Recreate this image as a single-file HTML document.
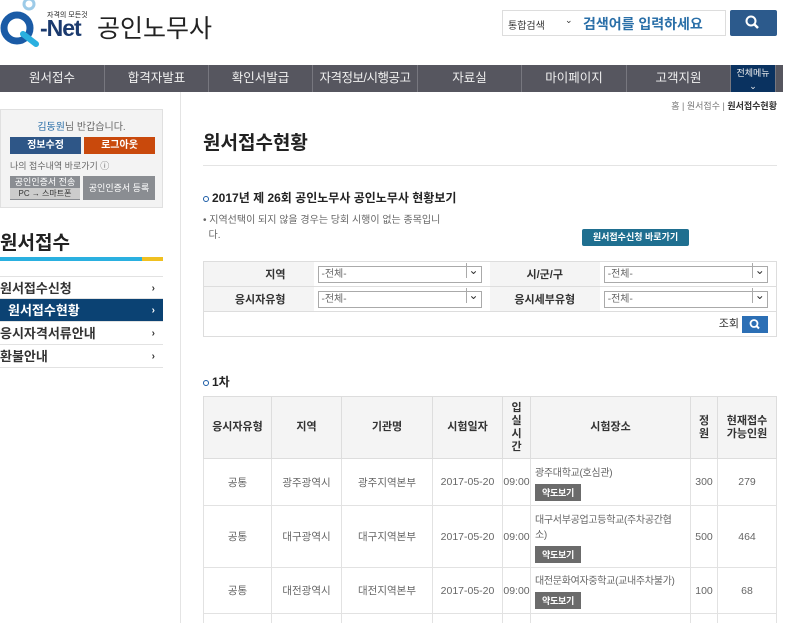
<!DOCTYPE html>
<html><head><meta charset="utf-8"><style>
*{margin:0;padding:0;box-sizing:border-box}
html,body{width:800px;height:623px;overflow:hidden}
body{background:#fff;font-family:"Liberation Sans","Noto Sans CJK KR",sans-serif;color:#333;position:relative}
.a{position:absolute}
.nav{top:65px;left:0;width:783px;height:27px;background:#56565f;display:flex}
.nav div{height:27px;line-height:27px;text-align:center;color:#f0f0f0;font-size:12.5px;border-right:1px solid #77777f;white-space:nowrap;overflow:hidden}
.menu div{position:absolute;left:0;width:163px;height:23px;line-height:23px;font-size:13px;font-weight:bold;color:#333;border-bottom:1px solid #e2e2e2}
.menu span{position:absolute;right:8px;font-size:10px}
table{border-collapse:collapse}
.ft{position:absolute;left:203px;top:261px;width:574px;border:1px solid #ddd}
.ft td{height:25px;font-size:11px;border-bottom:1px solid #ddd}
.ft .l{background:#f4f4f4;text-align:right;padding-right:28px;font-weight:bold;width:110px}
.sel{width:164px;height:17px;border:1px solid #aaa;font-size:10px;color:#666;line-height:15px;padding-left:3px;position:relative;margin-left:4px}
.sel:after{content:"⌄";position:absolute;right:0;top:-4px;width:14px;height:15px;border-left:1px solid #aaa;text-align:center;font-size:12px;color:#333}
.dt{position:absolute;left:203px;top:396px;width:574px;border:1px solid #ddd;table-layout:fixed}
.dt th{background:#f4f4f4;font-size:11px;font-weight:bold;border:1px solid #ddd;height:62px;line-height:13px}
.dt td{font-size:10.5px;color:#666;text-align:center;border:1px solid #e2e2e2}
.dt td.p{text-align:left;padding-left:4px;font-size:10px;letter-spacing:-0.3px}
.b{display:inline-block;background:#6b6b6b;color:#fff;font-size:9px;font-weight:bold;padding:2px 7px;margin-top:5px}
.dot{display:inline-block;width:6px;height:6px;border:1.5px solid #1a5ba6;border-radius:50%;vertical-align:middle;margin-right:3px}
</style></head><body>
<svg class="a" style="left:0;top:0" width="45" height="48"><circle cx="17" cy="28" r="13" fill="none" stroke="#1a5ba6" stroke-width="7"/><path d="M23 34 L36 44" stroke="#2ab0e0" stroke-width="6" stroke-linecap="round"/><circle cx="29" cy="4" r="5" fill="none" stroke="#9dcbe8" stroke-width="3"/></svg>
<div class="a" style="left:47px;top:10px;font-size:7px;color:#222">자격의 모든것</div>
<div class="a" style="left:40px;top:15px;font-size:23px;font-weight:bold;color:#1b3a6e;letter-spacing:-1px">-Net</div>
<div class="a" style="left:97px;top:9px;font-size:25px;color:#222">공인노무사</div>
<div class="a" style="left:502px;top:10px;width:224px;height:26px;border:1px solid #ddd"><span class="a" style="left:5px;top:6px;font-size:10px">통합검색</span><span class="a" style="left:62px;top:4px;font-size:9px">⌄</span><span class="a" style="left:80px;top:3px;font-size:14px;color:#2a6fa8;font-weight:bold">검색어를 입력하세요</span></div>
<div class="a" style="left:730px;top:10px;width:47px;height:26px;background:#2c5a8c;border-radius:2px"><svg width="47" height="26"><circle cx="21" cy="11" r="4.5" fill="none" stroke="#fff" stroke-width="2"/><path d="M24 14 L28 18" stroke="#fff" stroke-width="2.5"/></svg></div>
<div class="a nav"><div style="width:105px">원서접수</div><div style="width:104px">합격자발표</div><div style="width:104px">확인서발급</div><div style="width:105px;letter-spacing:-0.5px">자격정보/시행공고</div><div style="width:104px">자료실</div><div style="width:105px">마이페이지</div><div style="width:104px">고객지원</div><div style="width:45px;background:#0a3260;font-size:9px;line-height:13px;padding-top:2px">전체메뉴<br>⌄</div></div>
<div class="a" style="right:23px;top:99px;font-size:9px;color:#777">홈 | 원서접수 | <b style="color:#333">원서접수현황</b></div>
<div class="a" style="left:0;top:109px;width:163px;height:99px;background:#f3f3f3;border:1px solid #e0e0e0">
<div class="a" style="left:0;width:161px;top:8px;text-align:center;font-size:10px;color:#666"><span style="color:#2a6fa8">김동원</span>님 반갑습니다.</div>
<div class="a" style="left:9px;top:27px;width:71px;height:17px;background:#2e5687;color:#fff;font-size:10px;font-weight:bold;text-align:center;line-height:17px">정보수정</div>
<div class="a" style="left:83px;top:27px;width:71px;height:17px;background:#c9490c;color:#fff;font-size:10px;font-weight:bold;text-align:center;line-height:17px">로그아웃</div>
<div class="a" style="left:9px;top:49px;font-size:9px;color:#666">나의 접수내역 바로가기 ⓘ</div>
<div class="a" style="left:9px;top:66px;width:70px;height:24px;background:#8a8d92;color:#fff;font-size:9px;text-align:center;line-height:11px;padding-top:1px">공인인증서 전송<br><span style="background:#ccc;color:#333;display:block;font-size:8px">PC → 스마트폰</span></div>
<div class="a" style="left:82px;top:66px;width:72px;height:24px;background:#8a8d92;color:#fff;font-size:9px;text-align:center;line-height:24px">공인인증서 등록</div>
</div>
<div class="a" style="left:0;top:228px;font-size:19px;font-weight:bold;color:#222">원서접수</div>
<div class="a" style="left:0;top:257px;width:142px;height:4px;background:#2ab0e0"></div>
<div class="a" style="left:142px;top:257px;width:21px;height:4px;background:#f0c020"></div>
<div class="menu">
<div style="top:276px;border-top:1px solid #e2e2e2">원서접수신청<span>›</span></div>
<div style="top:299px;background:#0b4273;color:#fff;padding-left:8px">원서접수현황<span>›</span></div>
<div style="top:322px">응시자격서류안내<span>›</span></div>
<div style="top:345px">환불안내<span>›</span></div>
</div>
<div class="a" style="left:180px;top:92px;width:1px;height:531px;background:#e4e4e4"></div>
<div class="a" style="left:203px;top:128px;font-size:19px;font-weight:bold;color:#222">원서접수현황</div>
<div class="a" style="left:203px;top:165px;width:574px;height:1px;background:#e4e4e4"></div>
<div class="a" style="left:203px;top:189px;font-size:12px;font-weight:bold;color:#222"><span class="dot"></span>2017년 제 26회 공인노무사 공인노무사 현황보기</div>
<div class="a" style="left:203px;top:213px;font-size:10px;color:#666;line-height:15px">• 지역선택이 되지 않을 경우는 당회 시행이 없는 종목입니<br>&nbsp;&nbsp;다.</div>
<div class="a" style="left:582px;top:229px;width:107px;height:17px;background:#1f6f90;color:#fff;font-size:9px;font-weight:bold;text-align:center;line-height:17px;border-radius:2px">원서접수신청 바로가기</div>
<table class="ft">
<tr><td class="l">지역</td><td><div class="sel">-전체-</div></td><td class="l" style="text-align:center;padding:0">시/군/구</td><td><div class="sel">-전체-</div></td></tr>
<tr><td class="l">응시자유형</td><td><div class="sel">-전체-</div></td><td class="l" style="text-align:center;padding:0">응시세부유형</td><td><div class="sel">-전체-</div></td></tr>
<tr><td colspan="4" style="text-align:right;padding-right:8px;border:0">조회 <span style="display:inline-block;width:26px;height:17px;background:#2c6fb5;vertical-align:middle"><svg width="26" height="17"><circle cx="12" cy="7.5" r="3.5" fill="none" stroke="#fff" stroke-width="1.8"/><path d="M14.5 10 L17 12.5" stroke="#fff" stroke-width="2"/></svg></span></td></tr>
</table>
<div class="a" style="left:203px;top:373px;font-size:12px;font-weight:bold;color:#222"><span class="dot"></span>1차</div>
<table class="dt">
<tr><th style="width:68px">응시자유형</th><th style="width:70px">지역</th><th style="width:91px">기관명</th><th style="width:70px">시험일자</th><th style="width:28px">입<br>실<br>시<br>간</th><th style="width:160px">시험장소</th><th style="width:27px">정<br>원</th><th>현재접수<br>가능인원</th></tr>
<tr style="height:47px"><td>공통</td><td>광주광역시</td><td>광주지역본부</td><td>2017-05-20</td><td>09:00</td><td class="p">광주대학교(호심관)<br><span class="b">약도보기</span></td><td>300</td><td>279</td></tr>
<tr style="height:62px"><td>공통</td><td>대구광역시</td><td>대구지역본부</td><td>2017-05-20</td><td>09:00</td><td class="p">대구서부공업고등학교(주차공간협<br>소)<br><span class="b">약도보기</span></td><td>500</td><td>464</td></tr>
<tr style="height:46px"><td>공통</td><td>대전광역시</td><td>대전지역본부</td><td>2017-05-20</td><td>09:00</td><td class="p" style="white-space:nowrap">대전문화여자중학교(교내주차불가)<br><span class="b">약도보기</span></td><td>100</td><td>68</td></tr>
<tr style="height:30px"><td></td><td></td><td></td><td></td><td></td><td></td><td></td><td></td></tr>
</table>
</body></html>
